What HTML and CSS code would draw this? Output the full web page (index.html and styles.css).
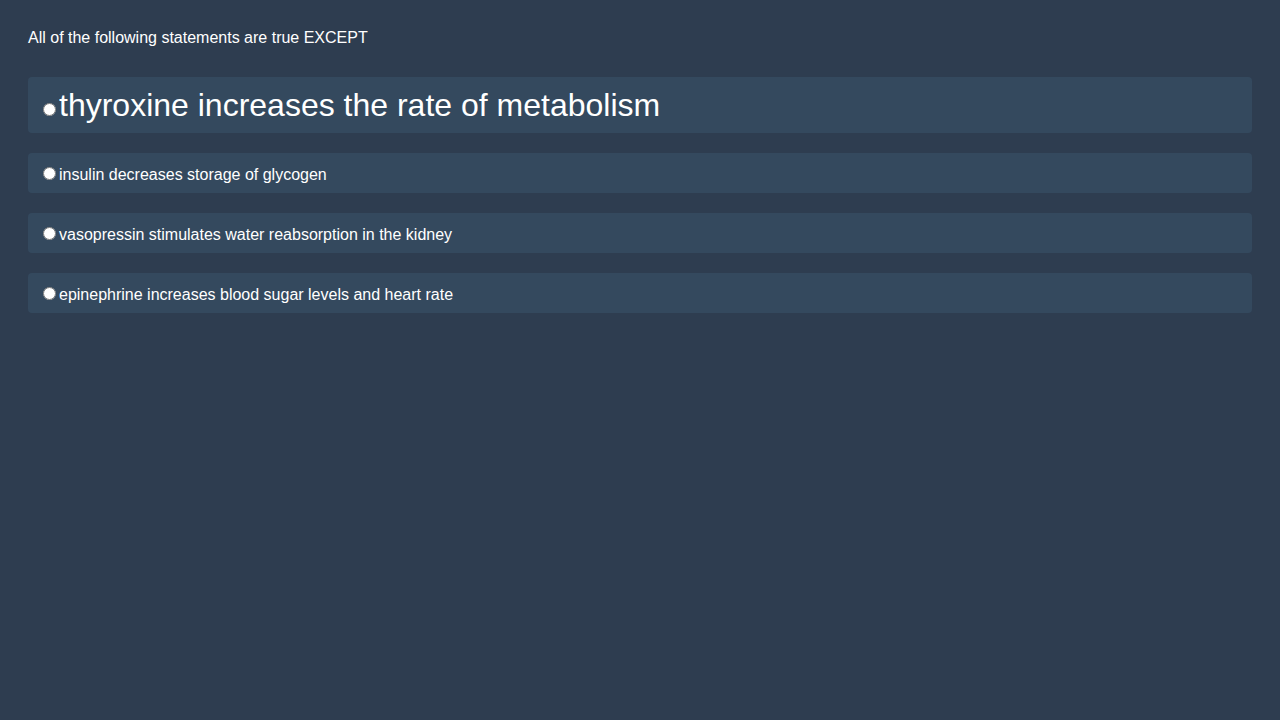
FILE: index.html
```html
<!DOCTYPE html>
<html>
<head>
<meta charset="utf-8">
<link rel="stylesheet" href="styles.css">
</head>
<body>
<div class="quiz">
  <div class="question">All of the following statements are true EXCEPT</div>
  <div class="options">
    <label class="option big"><input type="radio" name="q">thyroxine increases the rate of metabolism</label>
    <label class="option"><input type="radio" name="q">insulin decreases storage of glycogen</label>
    <label class="option"><input type="radio" name="q">vasopressin stimulates water reabsorption in the kidney</label>
    <label class="option"><input type="radio" name="q">epinephrine increases blood sugar levels and heart rate</label>
  </div>
</div>
</body>
</html>
```
FILE: styles.css
```css
html, body {
  margin: 0;
  padding: 0;
  background: #2e3d50;
  height: 100%;
}
body {
  font-family: "Liberation Sans", Arial, sans-serif;
  font-size: 16px;
  color: #ffffff;
}
.quiz {
  padding: 29px 28px 28px;
}
.question {
  margin-bottom: 30px;
}
.options {
  display: flex;
  flex-direction: column;
  gap: 20px;
}
.option {
  display: block;
  background: #34495e;
  border-radius: 4px;
  padding: 11px 10px 9px;
}
.option input {
  margin: 3px 3px 0 5px;
}
.option.big {
  font-size: 32px;
  padding: 10px 10px 9px;
}
```
